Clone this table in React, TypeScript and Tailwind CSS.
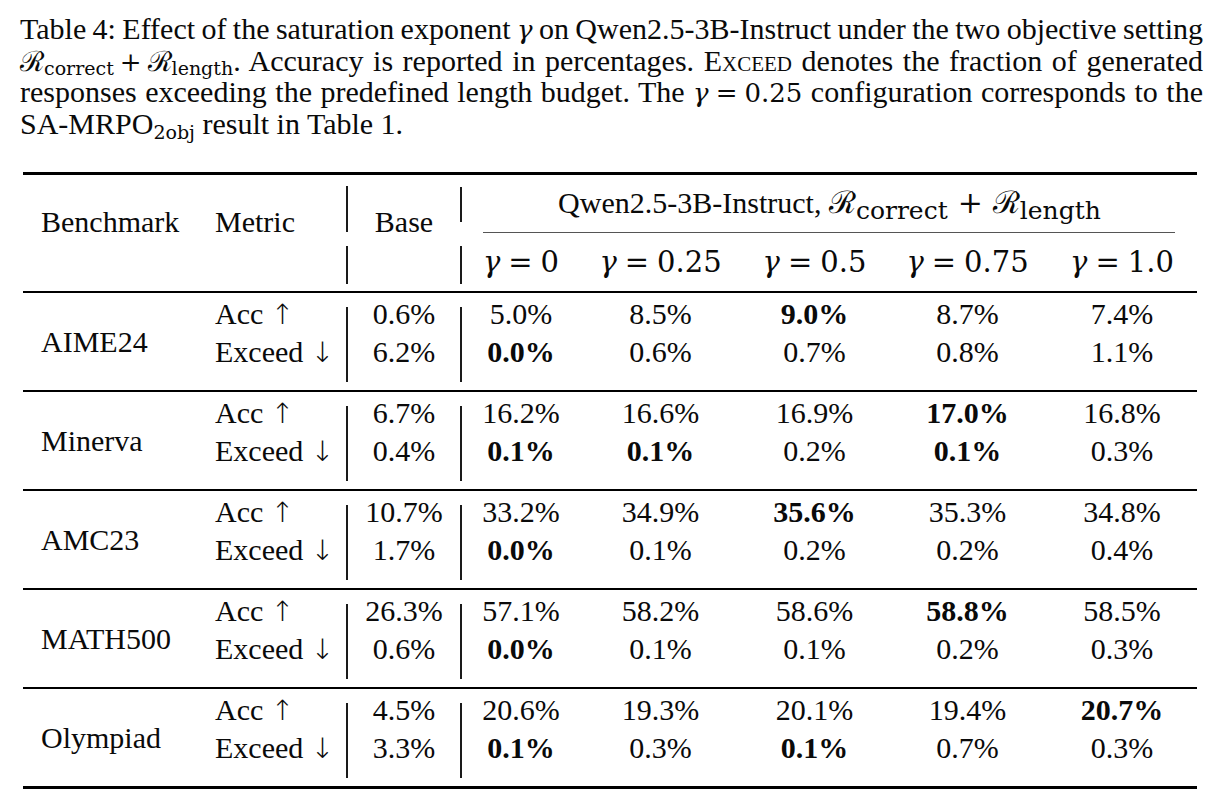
/* Table 4 – saturation exponent ablation, typeset like a LaTeX booktabs table */

type Group = {
  name: string;
  base: [string, string];
  acc: string[];
  exceed: string[];
  accBold: number[];
  exceedBold: number[];
};

const groups: Group[] = [
  {
    name: "AIME24",
    base: ["0.6%", "6.2%"],
    acc: ["5.0%", "8.5%", "9.0%", "8.7%", "7.4%"],
    exceed: ["0.0%", "0.6%", "0.7%", "0.8%", "1.1%"],
    accBold: [2],
    exceedBold: [0],
  },
  {
    name: "Minerva",
    base: ["6.7%", "0.4%"],
    acc: ["16.2%", "16.6%", "16.9%", "17.0%", "16.8%"],
    exceed: ["0.1%", "0.1%", "0.2%", "0.1%", "0.3%"],
    accBold: [3],
    exceedBold: [0, 1, 3],
  },
  {
    name: "AMC23",
    base: ["10.7%", "1.7%"],
    acc: ["33.2%", "34.9%", "35.6%", "35.3%", "34.8%"],
    exceed: ["0.0%", "0.1%", "0.2%", "0.2%", "0.4%"],
    accBold: [2],
    exceedBold: [0],
  },
  {
    name: "MATH500",
    base: ["26.3%", "0.6%"],
    acc: ["57.1%", "58.2%", "58.6%", "58.8%", "58.5%"],
    exceed: ["0.0%", "0.1%", "0.1%", "0.2%", "0.3%"],
    accBold: [3],
    exceedBold: [0],
  },
  {
    name: "Olympiad",
    base: ["4.5%", "3.3%"],
    acc: ["20.6%", "19.3%", "20.1%", "19.4%", "20.7%"],
    exceed: ["0.1%", "0.3%", "0.1%", "0.7%", "0.3%"],
    accBold: [4],
    exceedBold: [0, 2],
  },
];

const gammas = ["0", "0.25", "0.5", "0.75", "1.0"];
const colWidths = ["w-[118px]", "w-[161px]", "w-[147px]", "w-[159px]", "w-[150px]"];

// caption math is set a little smaller than the table's math
const CaptionReward = () => (
  <span className="font-['DejaVu_Serif',serif] font-light leading-none">
    <span className="text-[28px]">ℛ</span>
    <span className="relative top-[4px] text-[19px]">correct</span>
    <span className="mx-[6px] text-[26px]">+</span>
    <span className="text-[28px]">ℛ</span>
    <span className="relative top-[4px] text-[19px]">length</span>
  </span>
);

const TableReward = () => (
  <span className="font-['DejaVu_Serif',serif] font-light leading-none">
    <span className="text-[31px]">ℛ</span>
    <span className="relative top-[6px] text-[25px]">correct</span>
    <span className="mx-[10px] text-[30px]">+</span>
    <span className="text-[31px]">ℛ</span>
    <span className="relative top-[6px] text-[25px]">length</span>
  </span>
);

const Gamma = ({ value }: { value: string }) => (
  <span className="font-['DejaVu_Serif',serif] text-[29px] font-light leading-none">
    <span className="italic">γ</span>
    <span className="mx-[8px]">=</span>
    {value}
  </span>
);

const Bar = ({ className }: { className: string }) => (
  <div className={`w-[2px] shrink-0 bg-[#1a1a1a] ${className}`} />
);

const Arrow = ({ up }: { up: boolean }) => (
  <span className="font-['DejaVu_Sans',sans-serif] text-[28px] font-light leading-none">
    {up ? "↑" : "↓"}
  </span>
);

const Caption = () => (
  <div className="ml-[20px] w-[1183px] pt-[13px] text-[30px] leading-[31.5px]">
    <div className="whitespace-nowrap text-justify [text-align-last:justify] [word-spacing:-3px]">
      Table 4: Effect of the saturation exponent{" "}
      <span className="font-['DejaVu_Serif',serif] text-[26px] italic leading-none">γ</span> on
      Qwen2.5-3B-Instruct under the two objective setting
    </div>
    <div className="text-justify [text-align-last:justify]">
      <CaptionReward />. Accuracy is reported in percentages.{" "}
      <span className="[font-variant:small-caps]">Exceed</span> denotes the fraction of generated
    </div>
    <div className="text-justify [text-align-last:justify]">
      responses exceeding the predefined length budget. The{" "}
      <span className="font-['DejaVu_Serif',serif] text-[26px] font-light leading-none">
        <span className="italic">γ</span>
        <span className="mx-[7px]">=</span>0.25
      </span>{" "}
      configuration corresponds to the
    </div>
    <div>
      SA-MRPO
      <span className="relative top-[5px] font-['DejaVu_Serif',serif] text-[19px] font-light leading-none">
        2obj
      </span>{" "}
      result in Table 1.
    </div>
  </div>
);

const Header = () => (
  <div className="flex h-[116px]">
    <div className="w-[174px] shrink-0 pl-[18px] pt-[28px] leading-[38px]">Benchmark</div>
    <div className="w-[149px] shrink-0 pl-[18px] pt-[28px] leading-[38px]">Metric</div>
    <div className="flex flex-col">
      <Bar className="mt-[11px] h-[46px]" />
      <Bar className="mt-[14px] h-[38px]" />
    </div>
    <div className="w-[112px] shrink-0 pt-[28px] text-center leading-[38px]">Base</div>
    <div className="flex flex-col">
      <Bar className="mt-[12px] h-[35px]" />
      <Bar className="mt-[24px] h-[38px]" />
    </div>
    <div className="flex w-[735px] flex-col">
      <div className="h-[47px] whitespace-nowrap pt-[9px] text-center leading-[38px]">
        Qwen2.5-3B-Instruct, <TableReward />
      </div>
      <div className="ml-[21px] mr-[22px] mt-[10px] h-px bg-[#555]" />
      <div className="mt-[10px] flex leading-[38px]">
        {gammas.map((g, i) => (
          <div key={g} className={`${colWidths[i]} text-center`}>
            <Gamma value={g} />
          </div>
        ))}
      </div>
    </div>
  </div>
);

const Cell = ({ value, bold }: { value: string; bold: boolean }) => (
  <div className={bold ? "font-bold" : ""}>{value}</div>
);

const GroupRows = ({ group }: { group: Group }) => (
  <div className="flex h-[97px]">
    <div className="w-[174px] shrink-0 pl-[18px] pt-[30px] leading-[38px]">{group.name}</div>
    <div className="w-[149px] shrink-0 pl-[18px] pt-[2px] leading-[38px]">
      <div>
        Acc <Arrow up />
      </div>
      <div>
        Exceed <Arrow up={false} />
      </div>
    </div>
    <Bar className="mt-[14px] h-[75px]" />
    <div className="w-[112px] shrink-0 pt-[2px] text-center leading-[38px]">
      <div>{group.base[0]}</div>
      <div>{group.base[1]}</div>
    </div>
    <Bar className="mt-[14px] h-[75px]" />
    {group.acc.map((a, i) => (
      <div key={i} className={`${colWidths[i]} shrink-0 pt-[2px] text-center leading-[38px]`}>
        <Cell value={a} bold={group.accBold.includes(i)} />
        <Cell value={group.exceed[i]} bold={group.exceedBold.includes(i)} />
      </div>
    ))}
  </div>
);

export default function App() {
  return (
    <div className="h-[808px] w-[1220px] overflow-hidden bg-white font-['Liberation_Serif',serif] text-[#0a0a0a]">
      <Caption />
      <div className="ml-[23px] mt-[33px] w-[1174px] text-[30px]">
        <div className="h-[3px] bg-black" />
        <Header />
        <div className="h-[2px] bg-black" />
        {groups.map((g, i) => (
          <div key={g.name}>
            <GroupRows group={g} />
            <div className={i === groups.length - 1 ? "h-[3px] bg-black" : "h-[2px] bg-black"} />
          </div>
        ))}
      </div>
    </div>
  );
}
